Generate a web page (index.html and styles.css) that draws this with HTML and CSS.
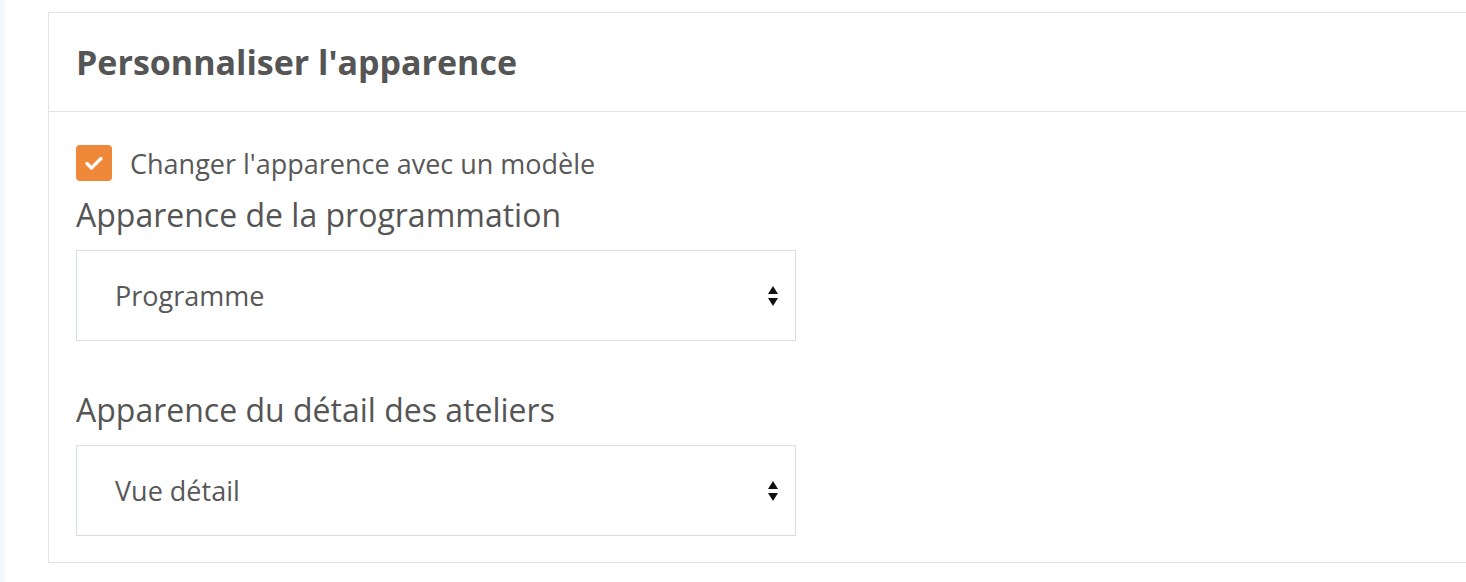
FILE: index.html
```html
<!DOCTYPE html>
<html lang="fr">
<head>
<meta charset="utf-8">
<title>Personnaliser l'apparence</title>
<link rel="stylesheet" href="styles.css">
</head>
<body>
<div class="page">
  <div class="strip"></div>
  <div class="main">
    <section class="card">
      <header class="card-header">
        <h2 class="card-title">Personnaliser l'apparence</h2>
      </header>
      <div class="card-body">
        <label class="check-row">
          <span class="checkbox">
            <svg width="18" height="14" viewBox="0 0 18 14"><path d="M2 7.5 L6.5 12 L16 2.5" fill="none" stroke="#fff" stroke-width="3.2" stroke-linecap="round" stroke-linejoin="round"/></svg>
          </span>
          <span class="check-text">Changer l'apparence avec un modèle</span>
        </label>
        <div class="field">
          <div class="field-label">Apparence de la programmation</div>
          <div class="select">
            <span class="select-value">Programme</span>
            <svg class="arrows" width="12" height="24" viewBox="0 0 12 24"><path d="M1 10 L6 2 L11 10 Z" fill="#111"/><path d="M1 14 L11 14 L6 22 Z" fill="#111"/></svg>
          </div>
        </div>
        <div class="field">
          <div class="field-label">Apparence du détail des ateliers</div>
          <div class="select">
            <span class="select-value">Vue détail</span>
            <svg class="arrows" width="12" height="24" viewBox="0 0 12 24"><path d="M1 10 L6 2 L11 10 Z" fill="#111"/><path d="M1 14 L11 14 L6 22 Z" fill="#111"/></svg>
          </div>
        </div>
      </div>
    </section>
  </div>
</div>
</body>
</html>
```

FILE: styles.css
```css
html, body {
  margin: 0;
  padding: 0;
  background: #ffffff;
  overflow: hidden;
  font-family: "Open Sans", "Noto Sans", sans-serif;
  color: #585858;
}
.page {
  display: flex;
  width: 1466px;
  height: 582px;
  overflow: hidden;
}
.strip {
  width: 5px;
  flex: none;
  background: #f3f6fd;
}
.main {
  flex: 1;
  padding: 12px 0 0 43px;
  min-width: 0;
  overflow: hidden;
}
.card {
  width: 1500px;
  border: 1px solid #e3e3e3;
  border-right: none;
  box-sizing: border-box;
}
.card-header {
  height: 98px;
  border-bottom: 1px solid #e3e3e3;
  display: flex;
  align-items: center;
  padding-left: 27px;
}
.card-title {
  margin: 0;
  font-size: 34px;
  line-height: 40px;
  font-weight: 700;
  color: #555555;
}
.card-body {
  padding: 33px 0 26px 27px;
}
.check-row {
  display: flex;
  align-items: center;
  height: 36px;
  gap: 18px;
}
.checkbox {
  width: 36px;
  height: 36px;
  border-radius: 4px;
  background: #f0883a;
  display: flex;
  align-items: center;
  justify-content: center;
}
.check-text {
  font-size: 27px;
  color: #585858;
}
.field-label {
  font-size: 32px;
  font-weight: 500;
  color: #555555;
  line-height: 34px;
  padding: 17px 0 18px;
}
.field + .field .field-label {
  padding-top: 52px;
}
.select {
  width: 720px;
  height: 91px;
  box-sizing: border-box;
  border: 1px solid #d9dde6;
  display: flex;
  align-items: center;
  justify-content: space-between;
  padding: 0 16px 0 38px;
}
.select-value {
  font-size: 27px;
  color: #585858;
}
.arrows {
  display: block;
}
```
